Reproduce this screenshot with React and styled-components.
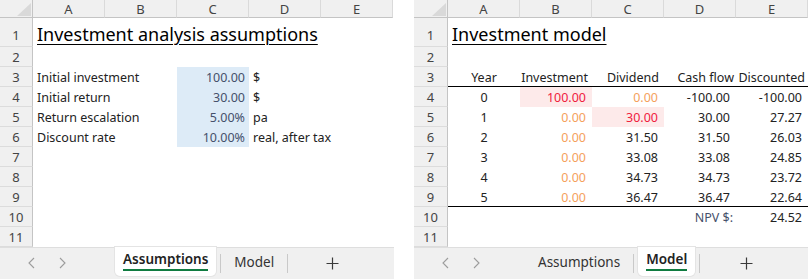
import React from 'react'
import styled, { createGlobalStyle } from 'styled-components'

const GlobalStyle = createGlobalStyle`
    html, body {
        margin: 0;
        padding: 0;
        background: #fff;
    }
    body {
        font-family: "Noto Sans", "Open Sans", sans-serif;
    }
`

const COLS = ['A', 'B', 'C', 'D', 'E']

const assumptions = [
    [{ t: 'Investment analysis assumptions', title: true, span: 5 }],
    [],
    [{ t: 'Initial investment' }, {}, { t: '100.00', a: 'r', tone: 'slate', fill: 'blue' }, { t: '$' }, {}],
    [{ t: 'Initial return' }, {}, { t: '30.00', a: 'r', tone: 'slate', fill: 'blue' }, { t: '$' }, {}],
    [{ t: 'Return escalation' }, {}, { t: '5.00%', a: 'r', tone: 'slate', fill: 'blue' }, { t: 'pa' }, {}],
    [{ t: 'Discount rate' }, {}, { t: '10.00%', a: 'r', tone: 'slate', fill: 'blue' }, { t: 'real, after tax' }, {}],
    [], [], [], [], [],
]

const num = (t, extra = {}) => ({ t, a: 'r', pad: 6, ...extra })
const zero = () => num('0.00', { tone: 'orange' })

const model = [
    [{ t: 'Investment model', title: true, span: 5 }],
    [],
    [
        { t: 'Year', a: 'c', line: true },
        { t: 'Investment', a: 'r', line: true },
        { t: 'Dividend', a: 'r', line: true, pad: 5 },
        { t: 'Cash flow', a: 'r', line: true, pad: 2 },
        { t: 'Discounted', a: 'r', line: true, pad: 3 },
    ],
    [{ t: '0', a: 'c' }, num('100.00', { tone: 'red', fill: 'pink' }), zero(), num('-100.00'), num('-100.00')],
    [{ t: '1', a: 'c' }, zero(), num('30.00', { tone: 'red', fill: 'pink' }), num('30.00'), num('27.27')],
    [{ t: '2', a: 'c' }, zero(), num('31.50'), num('31.50'), num('26.03')],
    [{ t: '3', a: 'c' }, zero(), num('33.08'), num('33.08'), num('24.85')],
    [{ t: '4', a: 'c' }, zero(), num('34.73'), num('34.73'), num('23.72')],
    [
        { t: '5', a: 'c', line: true },
        num('0.00', { tone: 'orange', line: true }),
        num('36.47', { line: true }),
        num('36.47', { line: true }),
        num('22.64', { line: true }),
    ],
    [{}, {}, {}, { t: 'NPV $:', a: 'r', pad: 3, tone: 'slate' }, num('24.52')],
    [],
]

const tones = {
    dark: '#222',
    slate: '#45506b',
    red: '#f0213d',
    orange: '#f5a15c',
}

const fills = {
    blue: '#ddebf7',
    pink: '#fdeaea',
}

const aligns = { l: 'flex-start', r: 'flex-end', c: 'center' }

const Page = styled.div`
    display: flex;
    gap: 20px;
    width: 808px;
    height: 279px;
    overflow: hidden;
`

const Panel = styled.div`
    width: 394px;
    display: flex;
    flex-direction: column;
    overflow: hidden;
`

const Grid = styled.div`
    display: grid;
    grid-template-columns: ${p => p.$head}px repeat(5, 72px);
    grid-template-rows: 18px 29px repeat(10, 20px);
    font-size: 12.5px;
    color: #222;
`

const Corner = styled.div`
    position: relative;
    background: #f0f0f0;
    border-right: 1px solid #c4c4c4;
    border-bottom: 1px solid #c4c4c4;
    box-sizing: border-box;

    &::after {
        content: '';
        position: absolute;
        right: 1px;
        bottom: 1px;
        border-style: solid;
        border-width: 0 0 13px 14px;
        border-color: transparent transparent #d9d9d9 transparent;
    }
`

const ColHead = styled.div`
    display: flex;
    align-items: center;
    justify-content: center;
    background: #f0f0f0;
    border-right: 1px solid #dadada;
    border-bottom: 1px solid #c4c4c4;
    box-sizing: border-box;
    color: #444;
    font-size: 13px;
`

const RowHead = styled.div`
    display: flex;
    align-items: center;
    justify-content: center;
    padding-top: ${p => (p.$title ? 6 : 0)}px;
    background: #f0f0f0;
    border-right: 1px solid #c4c4c4;
    border-bottom: 1px solid #dcdcdc;
    box-sizing: border-box;
    color: #444;
    font-size: 13px;
`

const Cell = styled.div`
    grid-column: span ${p => p.$span || 1};
    display: flex;
    align-items: center;
    justify-content: ${p => aligns[p.$align || 'l']};
    padding: 0 ${p => p.$pad}px 0 4px;
    min-width: 0;
    white-space: nowrap;
    color: ${p => tones[p.$tone || 'dark']};
    background: ${p => (p.$fill ? fills[p.$fill] : 'transparent')};
    box-shadow: ${p => (p.$line ? 'inset 0 -1px 0 #000' : 'none')};
`

const Title = styled(Cell)`
    align-items: flex-end;
    font-size: 18px;
    line-height: 26px;
    color: #000;

    span {
        text-decoration: underline;
        text-decoration-thickness: 1px;
        text-underline-offset: 3px;
    }
`

const TabBar = styled.div`
    flex: 1;
    display: flex;
    align-items: flex-start;
    background: #f0f0f0;
    border-top: 1px solid #dedede;
    font-size: 13.5px;
    color: #333;
`

const Nav = styled.div`
    width: 115px;
    flex: none;
    display: flex;
    align-items: center;
    gap: 24px;
    padding: 9px 0 0 28px;
    box-sizing: border-box;
`

const Tabs = styled.div`
    display: flex;
    align-items: flex-start;
    gap: 4px;
`

const Tab = styled.div`
    display: flex;
    flex-direction: column;
    align-items: center;
    padding: ${p => (p.$active ? '3px 8px 5px' : '6px 9px 0')};
    margin-top: -1px;
    background: ${p => (p.$active ? '#fff' : 'transparent')};
    border-radius: 0 0 5px 5px;
    box-shadow: ${p => (p.$active ? '0 0 0 1px #e4e4e4' : 'none')};
    font-weight: ${p => (p.$active ? 600 : 400)};
    color: ${p => (p.$active ? '#222' : '#333')};
    line-height: 19px;

    &::after {
        content: '';
        width: 100%;
        height: 2px;
        background: ${p => (p.$active ? '#107c41' : 'transparent')};
    }
`

const Sep = styled.div`
    width: 1px;
    height: 19px;
    margin-top: 6px;
    background: #c9c9c9;
`

const AddButton = styled.div`
    margin: 9px 0 0 ${p => p.$offset}px;
    display: flex;
`

function Chevron({ left }) {
    return (
        <svg width="7" height="12" viewBox="0 0 7 12">
            <path
                d={left ? 'M6 1 L1 6 L6 11' : 'M1 1 L6 6 L1 11'}
                fill="none"
                stroke="#9c9c9c"
                strokeWidth="1.1"
            />
        </svg>
    )
}

function Plus() {
    return (
        <svg width="13" height="13" viewBox="0 0 13 13">
            <path d="M6.5 0.5 V12.5 M0.5 6.5 H12.5" stroke="#3a3a3a" strokeWidth="1.2" />
        </svg>
    )
}

function Sheet({ rows, head, active }) {
    return (
        <Panel>
            <Grid $head={head}>
                <Corner />
                {COLS.map(c => <ColHead key={c}>{c}</ColHead>)}
                {rows.map((row, r) => {
                    const cells = row.length ? row : COLS.map(() => ({}))
                    return (
                        <React.Fragment key={r}>
                            <RowHead $title={r === 0}>{r + 1}</RowHead>
                            {cells.map((cell, i) =>
                                cell.title ? (
                                    <Title key={i} $span={cell.span} $pad={4}>
                                        <span>{cell.t}</span>
                                    </Title>
                                ) : (
                                    <Cell
                                        key={i}
                                        $align={cell.a}
                                        $pad={cell.pad ?? 4}
                                        $tone={cell.tone}
                                        $fill={cell.fill}
                                        $line={cell.line}
                                    >
                                        {cell.t}
                                    </Cell>
                                )
                            )}
                        </React.Fragment>
                    )
                })}
            </Grid>
            <TabBar>
                <Nav>
                    <Chevron left />
                    <Chevron />
                </Nav>
                <Tabs>
                    <Tab $active={active === 'Assumptions'}>Assumptions</Tab>
                    <Sep />
                    <Tab $active={active === 'Model'}>Model</Tab>
                    <Sep />
                </Tabs>
                <AddButton $offset={active === 'Model' ? 40 : 38}>
                    <Plus />
                </AddButton>
            </TabBar>
        </Panel>
    )
}

export default function App() {
    return (
        <>
            <GlobalStyle />
            <Page>
                <Sheet rows={assumptions} head={33} active="Assumptions" />
                <Sheet rows={model} head={34} active="Model" />
            </Page>
        </>
    )
}
